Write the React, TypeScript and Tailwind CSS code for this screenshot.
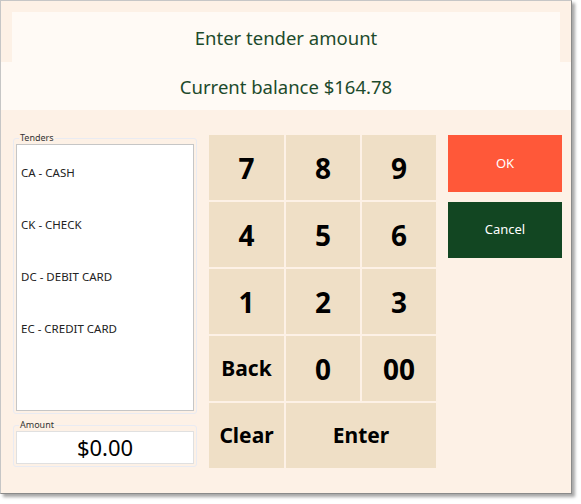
const tenders = ["CA - CASH", "CK - CHECK", "DC - DEBIT CARD", "EC - CREDIT CARD"]

const keys = [
  { label: "7", big: true },
  { label: "8", big: true },
  { label: "9", big: true },
  { label: "4", big: true },
  { label: "5", big: true },
  { label: "6", big: true },
  { label: "1", big: true },
  { label: "2", big: true },
  { label: "3", big: true },
  { label: "Back" },
  { label: "0", big: true },
  { label: "00", big: true },
  { label: "Clear" },
  { label: "Enter", wide: true },
]

function Key({ label, big, wide }: { label: string; big?: boolean; wide?: boolean }) {
  return (
    <button
      className={
        "flex items-center justify-center bg-[#efdfc6] font-bold text-black " +
        (big ? "text-[28px] " : "text-[21px] ") +
        (wide ? "col-span-2" : "")
      }
    >
      {label}
    </button>
  )
}

export default function App() {
  return (
    <div className="h-[504px] w-[581px] bg-white font-['Segoe_UI','Noto_Sans',sans-serif]">
      <div className="flex h-[494px] w-[572px] flex-col border border-[#c6c6c6] border-r-[#8a8a8a] border-b-[#8a8a8a] bg-[#fdf1e6] shadow-[3px_3px_3px_rgba(0,0,0,0.35)]">
        <div className="mx-[11px] mt-[11px] flex h-[50px] items-center justify-center bg-[#fffaf5] pt-[2px] text-[18.5px] text-[#1d4a2c]">
          Enter tender amount
        </div>
        <div className="flex h-[48px] items-center justify-center bg-[#fffaf5] pt-[2px] text-[18.5px] text-[#1d4a2c]">
          Current balance $164.78
        </div>

        <div className="flex pl-[12px] pt-[25px]">
          <div className="-mt-[3px] flex w-[184px] flex-col">
            <fieldset className="rounded-[3px] border border-[#e9ebf2] px-[2px] pb-[2px]">
              <legend className="ml-[3px] px-[1px] text-[9px] leading-[12px] text-[#333]">Tenders</legend>
              <div className="flex h-[267px] flex-col border border-[#c6c6c6] bg-white pt-[2px]">
                {tenders.map((t) => (
                  <div key={t} className="flex h-[52px] items-center pl-[4px] text-[11.5px] text-[#222]">
                    {t}
                  </div>
                ))}
              </div>
            </fieldset>
            <fieldset className="mt-[5px] rounded-[3px] border border-[#e9ebf2] px-[2px] pb-[2px]">
              <legend className="ml-[3px] px-[1px] text-[9px] leading-[12px] text-[#333]">Amount</legend>
              <div className="flex h-[33px] items-center justify-center border border-[#e0e0e0] bg-white text-[22px] text-black">
                $0.00
              </div>
            </fieldset>
          </div>

          <div className="ml-[12px] grid w-[227px] grid-cols-[75px_74px_74px] grid-rows-[repeat(5,65px)] gap-[2px]">
            {keys.map((k) => (
              <Key key={k.label} {...k} />
            ))}
          </div>

          <div className="ml-[12px] flex w-[114px] flex-col gap-[10px]">
            <button className="h-[57px] bg-[#ff5839] text-[13px] text-white">OK</button>
            <button className="h-[56px] bg-[#124622] text-[13px] text-white">Cancel</button>
          </div>
        </div>
      </div>
    </div>
  )
}
